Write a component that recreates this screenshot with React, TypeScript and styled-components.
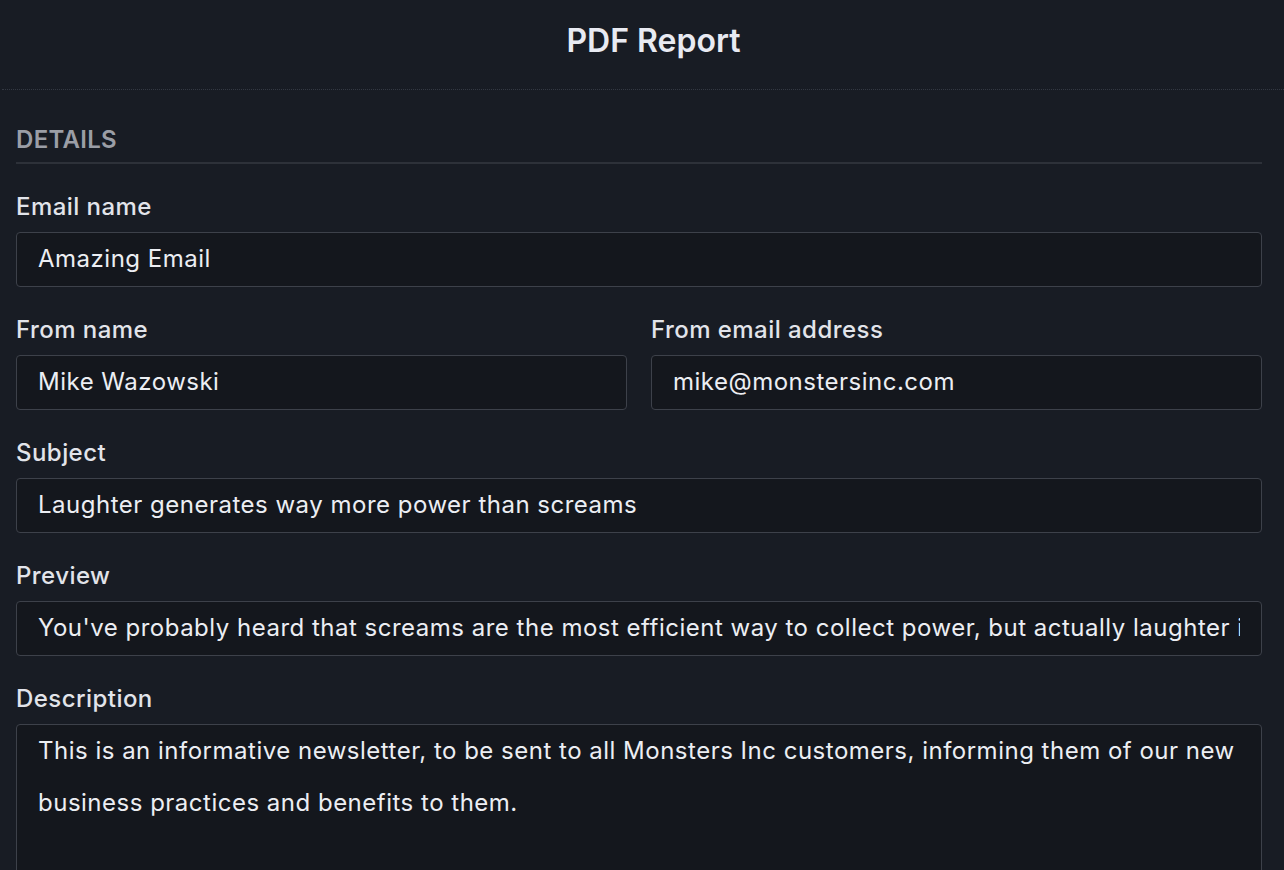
import React from "react";
import styled, { createGlobalStyle } from "styled-components";

const GlobalStyle = createGlobalStyle`
  html, body {
    margin: 0;
    padding: 0;
    background: #181c24;
    font-family: Inter, "Noto Sans", sans-serif;
    color: #e6e8ee;
    overflow: hidden;
  }
  * { box-sizing: border-box; }
`;

const Page = styled.div`
  min-height: 870px;
  background: #181c24;
`;

const Header = styled.header`
  height: 90px;
  border-bottom: 1px dotted #343943;
  margin-left: 2px;
  padding: 21px 0 0 21px;
  text-align: center;
`;

const Title = styled.h1`
  margin: 0;
  font-size: 32px;
  font-weight: 600;
  line-height: 39px;
  color: #e8eaf2;
`;

const Body = styled.main`
  padding: 0 22px 0 16px;
`;

const SectionTitle = styled.h2`
  margin: 35px 0 0;
  padding-bottom: 8px;
  border-bottom: 2px solid #2d3139;
  font-size: 24px;
  line-height: 29px;
  font-weight: 600;
  letter-spacing: 0.3px;
  color: #9b9ea6;
`;

const Form = styled.form`
  display: flex;
  flex-direction: column;
  gap: 28px;
  padding-top: 28px;
`;

const Row = styled.div`
  display: grid;
  grid-template-columns: 1fr 1fr;
  gap: 24px;
`;

const Field = styled.label`
  display: flex;
  flex-direction: column;
  gap: 10px;
`;

const Label = styled.span`
  font-size: 24px;
  line-height: 30px;
  font-weight: 500;
  letter-spacing: 0.45px;
  color: #e2e4ea;
`;

const Input = styled.input`
  height: 55px;
  width: 100%;
  padding: 0 21px 2px;
  border: 1px solid #3d414a;
  border-radius: 4px;
  background: #14171d;
  color: #eceef3;
  font-family: Inter, "Noto Sans", sans-serif;
  font-size: 24px;
  letter-spacing: 0.5px;
  outline: none;
`;

const TextArea = styled.textarea`
  width: 100%;
  height: 220px;
  padding: 0 21px;
  border: 1px solid #3d414a;
  border-radius: 4px;
  background: #14171d;
  color: #eceef3;
  font-family: Inter, "Noto Sans", sans-serif;
  font-size: 24px;
  line-height: 52px;
  letter-spacing: 0.5px;
  resize: none;
  outline: none;
  overflow: hidden;
`;

export default function App() {
  return (
    <>
      <GlobalStyle />
      <Page>
        <Header>
          <Title>PDF Report</Title>
        </Header>
        <Body>
          <SectionTitle>DETAILS</SectionTitle>
          <Form onSubmit={(e) => e.preventDefault()}>
            <Field>
              <Label>Email name</Label>
              <Input readOnly defaultValue="Amazing Email" />
            </Field>
            <Row>
              <Field>
                <Label>From name</Label>
                <Input readOnly defaultValue="Mike Wazowski" />
              </Field>
              <Field>
                <Label>From email address</Label>
                <Input readOnly defaultValue="mike@monstersinc.com" />
              </Field>
            </Row>
            <Field>
              <Label>Subject</Label>
              <Input readOnly defaultValue="Laughter generates way more power than screams" />
            </Field>
            <Field>
              <Label>Preview</Label>
              <Input
                readOnly
                defaultValue="You've probably heard that screams are the most efficient way to collect power, but actually laughter is ten times more powerful."
              />
            </Field>
            <Field>
              <Label>Description</Label>
              <TextArea
                readOnly
                defaultValue="This is an informative newsletter, to be sent to all Monsters Inc customers, informing them of our new business practices and benefits to them."
              />
            </Field>
          </Form>
        </Body>
      </Page>
    </>
  );
}
